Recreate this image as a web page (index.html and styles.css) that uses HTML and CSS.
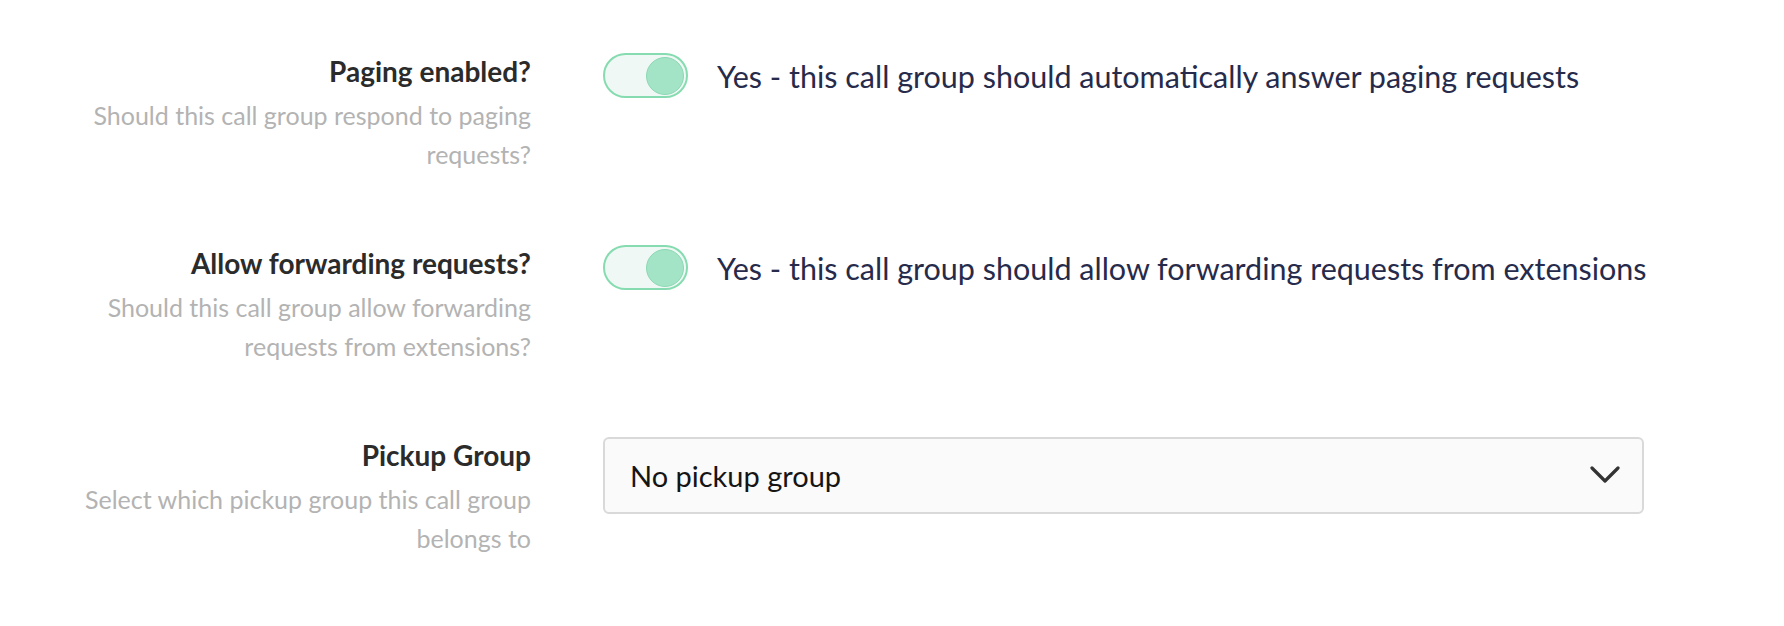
FILE: index.html
```html
<!DOCTYPE html>
<html lang="en">

<head>
    <meta charset="UTF-8">
    <meta name="viewport" content="width=device-width, initial-scale=1.0">
    <title>Call Group Settings</title>
    <link rel="stylesheet" href="styles.css">
</head>

<body>
    <form class="settings">
        <div class="field">
            <div class="field-info">
                <div class="field-title">Paging enabled?</div>
                <div class="field-desc">Should this call group respond to paging requests?</div>
            </div>
            <div class="field-control">
                <label class="switch">
                    <input type="checkbox" checked>
                    <span class="slider"></span>
                    <span class="switch-text">Yes - this call group should automatically answer paging requests</span>
                </label>
            </div>
        </div>

        <div class="field">
            <div class="field-info">
                <div class="field-title">Allow forwarding requests?</div>
                <div class="field-desc">Should this call group allow forwarding requests from extensions?</div>
            </div>
            <div class="field-control">
                <label class="switch">
                    <input type="checkbox" checked>
                    <span class="slider"></span>
                    <span class="switch-text">Yes - this call group should allow forwarding requests from extensions</span>
                </label>
            </div>
        </div>

        <div class="field">
            <div class="field-info">
                <div class="field-title">Pickup Group</div>
                <div class="field-desc">Select which pickup group this call group belongs to</div>
            </div>
            <div class="field-control">
                <div class="select-wrap">
                    <select class="select">
                        <option>No pickup group</option>
                    </select>
                    <svg class="chevron" width="30" height="18" viewBox="0 0 30 18">
                        <path d="M2 2 L15 15 L28 2" fill="none" stroke="#333" stroke-width="3.2" stroke-linecap="round" stroke-linejoin="round" />
                    </svg>
                </div>
            </div>
        </div>
    </form>
</body>

</html>
```

FILE: styles.css
```css
body {
    font-family: 'Lato', 'Liberation Sans', sans-serif;
    background-color: #fff;
    margin: 0;
}

.settings {
    padding-top: 50px;
}

.field {
    display: grid;
    grid-template-columns: 531px 1041px;
    column-gap: 72px;
    margin-bottom: 68px;
}

.field-info {
    text-align: right;
    padding-left: 70px;
}

.field-title {
    font-size: 28px;
    line-height: 42px;
    font-weight: bold;
    color: #2b2b2b;
}

.field-desc {
    font-size: 25px;
    line-height: 39px;
    color: #b3b3b3;
    margin-top: 4px;
}

.field-control {
    padding-top: 3px;
}

.switch {
    display: flex;
    align-items: center;
    cursor: pointer;
}

.switch input {
    display: none;
}

.slider {
    box-sizing: border-box;
    width: 85px;
    height: 45px;
    border: 2px solid #86dcb0;
    border-radius: 23px;
    background-color: #eff8f4;
    display: flex;
    align-items: center;
    justify-content: flex-end;
    padding-right: 2px;
    flex-shrink: 0;
}

.slider::after {
    content: '';
    box-sizing: border-box;
    width: 38px;
    height: 38px;
    border-radius: 50%;
    background-color: #a3e4c6;
    border: 1px solid #8bd8b4;
}

.switch-text {
    margin-left: 29px;
    font-size: 30.5px;
    color: #272b4b;
    white-space: nowrap;
}

.select-wrap {
    position: relative;
}

.select {
    appearance: none;
    -webkit-appearance: none;
    box-sizing: border-box;
    width: 100%;
    height: 77px;
    padding: 0 70px 0 25px;
    font-family: inherit;
    font-size: 29px;
    color: #151515;
    background-color: #fafafa;
    border: 2px solid #d9d9d9;
    border-radius: 6px;
}

.chevron {
    position: absolute;
    right: 24px;
    top: 29px;
    pointer-events: none;
}
```
